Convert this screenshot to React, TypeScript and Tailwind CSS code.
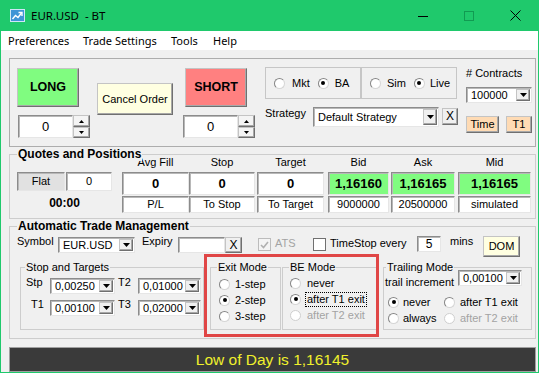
import React from "react";

// Shared bevel styles (classic WinForms look)
const raised =
  "border border-t-[#c4c4c4] border-l-[#c4c4c4] border-r-[#707070] border-b-[#707070] shadow-[inset_-1px_-1px_0_#a8a8a8]";
const sunken =
  "border border-t-[#8c8c8c] border-l-[#8c8c8c] border-r-[#e6e6e6] border-b-[#e6e6e6] shadow-[inset_1px_1px_0_#b8b8b8]";

function Tri({ up = false, small = false }: { up?: boolean; small?: boolean }) {
  const w = small ? 5 : 7;
  const h = small ? 3 : 4;
  return (
    <svg width={w} height={h} viewBox={`0 0 ${w} ${h}`}>
      <polygon points={up ? `0,${h} ${w},${h} ${w / 2},0` : `0,0 ${w},0 ${w / 2},${h}`} fill="#000" />
    </svg>
  );
}

function Spinner({ className = "" }: { className?: string }) {
  return (
    <div className={`flex ${className}`}>
      <div className={`w-[55px] h-[23px] bg-white ${sunken} flex items-center justify-center text-[13px]`}>0</div>
      <div className="w-[17px] h-[23px] flex flex-col">
        <div className={`h-[12px] bg-[#f4f4f4] ${raised} flex items-center justify-center`}>
          <Tri up small />
        </div>
        <div className={`h-[11px] bg-[#f4f4f4] ${raised} flex items-center justify-center`}>
          <Tri small />
        </div>
      </div>
    </div>
  );
}

function Combo({ value, className = "" }: { value: string; className?: string }) {
  return (
    <div className={`flex bg-white ${sunken} ${className}`}>
      <span className="flex-1 pl-[4px] flex items-center whitespace-nowrap overflow-hidden">{value}</span>
      <span className={`w-[14px] my-[1px] mr-[1px] bg-[#f0f0f0] ${raised} flex items-center justify-center`}>
        <Tri />
      </span>
    </div>
  );
}

function Radio({
  label,
  checked = false,
  disabled = false,
  focus = false,
  gap = "gap-[5px]",
  className = "",
}: {
  label: string;
  checked?: boolean;
  disabled?: boolean;
  focus?: boolean;
  gap?: string;
  className?: string;
}) {
  return (
    <div className={`flex items-center h-[16px] ${gap} ${className}`}>
      <span
        className={`w-[11px] h-[11px] rounded-full border bg-white flex items-center justify-center ${
          disabled
            ? "border-[#cfcfcf]"
            : "border-t-[#858585] border-l-[#858585] border-r-[#d6d6d6] border-b-[#d6d6d6]"
        }`}
      >
        {checked && <span className="w-[4px] h-[4px] rounded-full bg-black" />}
      </span>
      <span
        className={`whitespace-nowrap ${disabled ? "text-[#a3a3a3]" : "text-black"} ${
          focus ? "border border-dotted border-black px-[1px] -ml-[2px]" : ""
        }`}
      >
        {label}
      </span>
    </div>
  );
}

function Check({ checked = false, disabled = false, className = "" }: { checked?: boolean; disabled?: boolean; className?: string }) {
  return (
    <span
      className={`w-[13px] h-[13px] border flex items-center justify-center ${
        disabled ? "border-[#bcbcbc] bg-[#f4f4f4]" : "border-[#707070] bg-white"
      } ${className}`}
    >
      {checked && (
        <svg width="9" height="8" viewBox="0 0 9 8">
          <polyline points="1,4 3.5,6.5 8,1" fill="none" stroke={disabled ? "#b0b0b0" : "#000"} strokeWidth="1.6" />
        </svg>
      )}
    </span>
  );
}

function Group({
  label,
  bold = false,
  labelLeft = "left-[6px]",
  className = "",
  children,
}: {
  label: string;
  bold?: boolean;
  labelLeft?: string;
  className?: string;
  children?: React.ReactNode;
}) {
  return (
    <div className={`relative border border-[#cdcdcd] ${className}`}>
      <span
        className={`absolute top-[-8px] ${labelLeft} px-[1px] bg-[#f0f0f0] leading-[14px] whitespace-nowrap ${
          bold ? "font-bold text-[12px]" : "text-[11px]"
        }`}
      >
        {label}
      </span>
      {children}
    </div>
  );
}

function QuoteCol({
  head,
  value,
  sub,
  w,
  ml,
  green = false,
}: {
  head: string;
  value: string;
  sub: string;
  w: string;
  ml: string;
  green?: boolean;
}) {
  return (
    <div className={`flex flex-col ${w} ${ml}`}>
      <div className="h-[15px] flex items-center justify-center">{head}</div>
      <div
        className={`mt-[2px] h-[23px] ${green ? "bg-[#80fc80]" : "bg-white"} ${sunken} flex items-center justify-center font-bold text-[13px]`}
      >
        {value}
      </div>
      <div className={`mt-[1px] h-[17px] bg-white ${sunken} flex items-center justify-center`}>{sub}</div>
    </div>
  );
}

export default function App() {
  return (
    <div className="w-[539px] h-[373px] overflow-hidden bg-[#f0f0f0] border-x border-b border-[#1fc96c] flex flex-col font-['Liberation_Sans',Arial,sans-serif] text-[11px] leading-[13px] text-black">
      {/* Title bar */}
      <div className="h-[31px] shrink-0 bg-[#1fc96c] flex items-center">
        <svg className="ml-[9px]" width="15" height="13" viewBox="0 0 15 13">
          <rect x="0.5" y="0.5" width="14" height="12" fill="#3f95d6" stroke="#cfe6f7" />
          <polyline points="2.5,10 5.5,6.5 8,8.5 11.5,4" fill="none" stroke="#fff" strokeWidth="1.4" />
          <polyline points="8.5,3.5 12,3.5 12,7" fill="none" stroke="#fff" strokeWidth="1.4" />
        </svg>
        <span className="ml-[6px] whitespace-pre font-['Noto_Sans',sans-serif] text-[11.5px] leading-[16px]">EUR.USD  - BT</span>
        <div className="ml-auto flex h-full">
          <div className="w-[46px] flex items-center justify-center">
            <svg width="10" height="10" viewBox="0 0 10 10">
              <line x1="0" y1="5.5" x2="10" y2="5.5" stroke="#000" strokeWidth="1" />
            </svg>
          </div>
          <div className="w-[46px] flex items-center justify-center">
            <svg width="10" height="10" viewBox="0 0 10 10">
              <rect x="0.5" y="0.5" width="9" height="9" fill="none" stroke="#119b52" strokeWidth="1" />
            </svg>
          </div>
          <div className="w-[46px] flex items-center justify-center">
            <svg width="11" height="11" viewBox="0 0 11 11">
              <line x1="0.5" y1="0.5" x2="10.5" y2="10.5" stroke="#000" strokeWidth="1" />
              <line x1="10.5" y1="0.5" x2="0.5" y2="10.5" stroke="#000" strokeWidth="1" />
            </svg>
          </div>
        </div>
      </div>

      {/* Menu */}
      <div className="h-[19px] shrink-0 bg-white flex items-center pl-[7px] font-['Noto_Sans',sans-serif] text-[11px] leading-[16px]">
        <span className="w-[75px]">Preferences</span>
        <span className="w-[88px]">Trade Settings</span>
        <span className="w-[42px]">Tools</span>
        <span>Help</span>
      </div>

      {/* Body */}
      <div className="flex flex-col pl-[8px]">
        {/* Order entry panel */}
        <div className="mt-[8px] w-[527px] h-[89px] border border-[#adadad] flex items-start">
          <div className="ml-[7px] mt-[9px] flex flex-col">
            <div className={`w-[62px] h-[39px] bg-[#80fc80] ${raised} flex items-center justify-center font-bold text-[12.5px]`}>
              LONG
            </div>
            <Spinner className="mt-[8px] ml-[1px]" />
          </div>

          <div className={`ml-[7px] mt-[24px] w-[76px] h-[32px] bg-[#ffffe1] ${raised} flex items-center justify-center`}>
            Cancel Order
          </div>

          <div className="ml-[10px] mt-[9px] flex flex-col">
            <div className={`ml-[2px] w-[62px] h-[39px] bg-[#ff8080] ${raised} flex items-center justify-center font-bold text-[12.5px]`}>
              SHORT
            </div>
            <Spinner className="mt-[8px]" />
          </div>

          <div className="ml-[10px] mt-[8px] flex flex-col">
            <div className="flex">
              <div className="w-[96px] h-[32px] border border-[#c6c6c6] flex items-center pl-[8px]">
                <Radio label="Mkt" gap="gap-[7px]" />
                <Radio label="BA" checked gap="gap-[6px]" className="ml-[8px]" />
              </div>
              <div className="w-[96px] h-[32px] border border-[#c6c6c6] flex items-center pl-[8px]">
                <Radio label="Sim" gap="gap-[6px]" />
                <Radio label="Live" checked gap="gap-[5px]" className="ml-[8px]" />
              </div>
            </div>
            <div className="mt-[8px] flex items-start">
              <span className="w-[48px]">Strategy</span>
              <Combo value="Default Strategy" className="w-[126px] h-[20px]" />
              <div className={`ml-[3px] mt-[1px] w-[16px] h-[17px] bg-[#f0f0f0] ${raised} flex items-center justify-center text-[12px]`}>
                X
              </div>
            </div>
          </div>

          <div className="ml-[8px] mt-[8px] flex flex-col">
            <span># Contracts</span>
            <Combo value="100000" className="mt-[7px] w-[66px] h-[16px]" />
            <div className="mt-[13px] flex">
              <div className={`w-[33px] h-[17px] bg-[#ffdbb4] ${raised} flex items-center justify-center`}>Time</div>
              <div className={`ml-[7px] w-[26px] h-[17px] bg-[#ffdbb4] ${raised} flex items-center justify-center`}>T1</div>
            </div>
          </div>
        </div>

        {/* Quotes and Positions */}
        <Group label="Quotes and Positions" bold labelLeft="left-[7px]" className="mt-[7px] w-[527px] h-[65px]">
          <div className="flex items-start">
            <div className="ml-[7px] w-[95px] flex flex-col">
              <div className="mt-[17px] flex">
                <div className={`w-[48px] h-[19px] bg-[#e1e1e1] ${sunken} flex items-center justify-center`}>Flat</div>
                <div className={`ml-[1px] w-[46px] h-[19px] bg-white ${sunken} flex items-center justify-center`}>0</div>
              </div>
              <div className="mt-[5px] text-center font-bold text-[12px] leading-[14px]">00:00</div>
            </div>
            <QuoteCol head="Avg Fill" value="0" sub="P/L" w="w-[67px]" ml="ml-[10px]" />
            <QuoteCol head="Stop" value="0" sub="To Stop" w="w-[66px]" ml="ml-[0px]" />
            <QuoteCol head="Target" value="0" sub="To Target" w="w-[67px]" ml="ml-[2px]" />
            <QuoteCol head="Bid" value="1,16160" sub="9000000" w="w-[61px]" ml="ml-[4px]" green />
            <QuoteCol head="Ask" value="1,16165" sub="20500000" w="w-[64px]" ml="ml-[2px]" green />
            <QuoteCol head="Mid" value="1,16165" sub="simulated" w="w-[73px]" ml="ml-[3px]" green />
          </div>
        </Group>

        {/* Automatic Trade Management */}
        <Group label="Automatic Trade Management" bold labelLeft="left-[7px]" className="mt-[7px] w-[527px] h-[113px]">
          <div className="pt-[8px] flex flex-col">
            <div className="h-[22px] flex items-start">
              <span className="ml-[7px] w-[41px]">Symbol</span>
              <Combo value="EUR.USD" className="mt-[2px] w-[77px] h-[16px]" />
              <span className="ml-[7px] w-[36px]">Expiry</span>
              <div className={`mt-[2px] w-[47px] h-[16px] bg-white ${sunken}`} />
              <div className={`mt-[2px] w-[17px] h-[16px] bg-[#f0f0f0] ${raised} flex items-center justify-center text-[12px]`}>X</div>
              <Check checked disabled className="ml-[16px] mt-[3px]" />
              <span className="ml-[4px] w-[22px] mt-[2px] text-[#a3a3a3]">ATS</span>
              <Check className="ml-[16px] mt-[3px]" />
              <span className="ml-[4px] w-[83px] mt-[2px]">TimeStop every</span>
              <div className={`ml-[4px] mt-[1px] w-[24px] h-[16px] bg-white ${sunken} flex items-center justify-center text-[12px]`}>5</div>
              <span className="ml-[9px] w-[24px]">mins</span>
              <div className={`ml-[9px] mt-[1px] w-[37px] h-[21px] bg-[#ffffe1] ${raised} flex items-center justify-center`}>DOM</div>
            </div>

            <div className="mt-[10px] flex items-start">
              <Group label="Stop and Targets" labelLeft="left-[4px]" className="ml-[10px] w-[184px] h-[63px]">
                <div className="pt-[8px] flex flex-col">
                  <div className="flex items-start">
                    <span className="ml-[5px] w-[24px]">Stp</span>
                    <Combo value="0,00250" className="mt-[2px] w-[65px] h-[16px]" />
                    <span className="ml-[3px] w-[20px]">T2</span>
                    <Combo value="0,01000" className="mt-[2px] w-[63px] h-[16px]" />
                  </div>
                  <div className="mt-[4px] flex items-start">
                    <span className="ml-[5px] w-[24px] pl-[5px]">T1</span>
                    <Combo value="0,00100" className="mt-[2px] w-[65px] h-[16px]" />
                    <span className="ml-[3px] w-[20px]">T3</span>
                    <Combo value="0,02000" className="mt-[2px] w-[63px] h-[16px]" />
                  </div>
                </div>
              </Group>

              <Group label="Exit Mode" labelLeft="left-[6px]" className="ml-[6px] w-[71px] h-[63px]">
                <div className="pt-[8px] pl-[8px] flex flex-col">
                  <Radio label="1-step" />
                  <Radio label="2-step" checked />
                  <Radio label="3-step" />
                </div>
              </Group>

              <Group label="BE Mode" labelLeft="left-[6px]" className="ml-[1px] w-[96px] h-[63px]">
                <div className="pt-[7px] pl-[7px] flex flex-col">
                  <Radio label="never" gap="gap-[6px]" />
                  <Radio label="after T1 exit" checked focus gap="gap-[6px]" />
                  <Radio label="after T2 exit" disabled gap="gap-[6px]" />
                </div>
              </Group>

              <Group label="Trailing Mode" labelLeft="left-[2px]" className="ml-[5px] w-[149px] h-[63px]">
                <div className="pt-[2px] pl-[1px] flex flex-col">
                  <div className="flex items-start">
                    <span className="w-[73px] mt-[6px] whitespace-nowrap">trail increment</span>
                    <Combo value="0,00100" className="w-[64px] h-[16px]" />
                  </div>
                  <div className="mt-[5px] pl-[3px] grid grid-cols-[56px_1fr]">
                    <Radio label="never" checked gap="gap-[4px]" />
                    <Radio label="after T1 exit" gap="gap-[5px]" />
                    <Radio label="always" gap="gap-[4px]" />
                    <Radio label="after T2 exit" disabled gap="gap-[5px]" />
                  </div>
                </div>
              </Group>
            </div>
          </div>

          {/* highlight annotation */}
          <div className="absolute left-[194px] top-[27px] w-[175px] h-[83px] border-[3px] border-[#e04646]" />
        </Group>

        {/* Status bar */}
        <div className="mt-[8px] w-[527px] h-[25px] bg-[#3a3a3a] border border-[#a0a0a0] flex items-center justify-center text-[#f0f02c] text-[15.5px] leading-[18px]">
          Low of Day is 1,16145
        </div>
      </div>
    </div>
  );
}
